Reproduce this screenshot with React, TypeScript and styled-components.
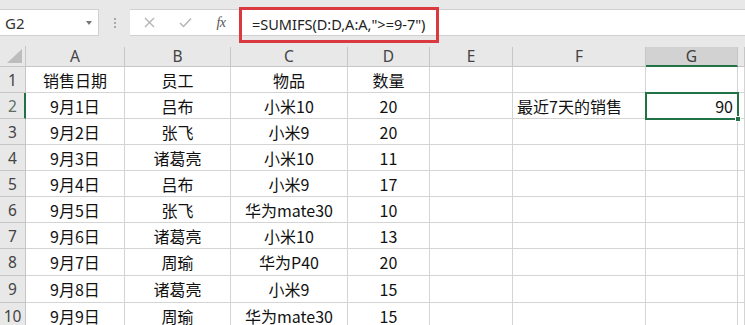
import React from "react";
import styled, { createGlobalStyle } from "styled-components";

const Global = createGlobalStyle`
  html, body { margin: 0; padding: 0; background: #fff; }
  body { font-family: "Noto Sans CJK SC", "Noto Sans", sans-serif; overflow: hidden; }
`;

const COLS = "26px 99px 106px 117px 82px 83px 133px 92px 1fr";
const GREEN = "#217346";

const Page = styled.div`
  width: 745px;
  height: 325px;
  overflow: hidden;
  background: #fff;
`;

const Toolbar = styled.div`
  display: flex;
  align-items: flex-start;
  height: 46px;
  padding-top: 9px;
  box-sizing: border-box;
  background: #e8e8e8;
`;

const NameBox = styled.div`
  width: 99px;
  height: 27px;
  box-sizing: border-box;
  background: #fff;
  border: 1px solid #d0d0d0;
  border-left: none;
  display: flex;
  align-items: center;
  justify-content: space-between;
  padding: 0 5px 0 5px;
  font-family: "Noto Sans", sans-serif;
  font-size: 15px;
  color: #333;
`;

const Caret = styled.span`
  width: 0;
  height: 0;
  border-left: 3.5px solid transparent;
  border-right: 3.5px solid transparent;
  border-top: 4px solid #777;
  margin-right: 1px;
`;

const Grip = styled.div`
  width: 31px;
  height: 27px;
  display: flex;
  flex-direction: column;
  align-items: center;
  justify-content: center;
  gap: 2px;
  span {
    width: 2px;
    height: 2px;
    background: #a8a8a8;
  }
`;

const FormulaBar = styled.div`
  flex: 1;
  height: 27px;
  box-sizing: border-box;
  background: #fff;
  border-top: 1px solid #d0d0d0;
  border-bottom: 1px solid #d0d0d0;
  display: flex;
  align-items: center;
`;

const IconSlot = styled.div<{ $w: number }>`
  width: ${(p) => p.$w}px;
  height: 25px;
  display: flex;
  align-items: center;
  justify-content: center;
  flex: none;
`;

const Fx = styled.span`
  font-family: "Liberation Serif", serif;
  font-style: italic;
  font-size: 14px;
  color: #555;
  letter-spacing: -0.5px;
`;

const Highlight = styled.div`
  align-self: flex-start;
  margin-top: -3px;
  height: 36px;
  width: 200px;
  box-sizing: border-box;
  border: 3px solid #d9393f;
  display: flex;
  align-items: center;
  padding: 0 0 3px 10px;
  font-family: "Noto Sans", sans-serif;
  font-size: 14.5px;
  color: #222;
  white-space: nowrap;
  flex: none;
`;

const Grid = styled.div`
  display: grid;
  grid-template-columns: ${COLS};
`;

const HeaderRow = styled(Grid)`
  height: 21px;
  background: #e8e8e8;
`;

const Corner = styled.div`
  position: relative;
  border-right: 1px solid #c6c6c6;
  border-bottom: 1px solid #c6c6c6;
  display: flex;
  align-items: flex-end;
  justify-content: flex-end;
  padding: 0 3px 3px 0;
`;

const ColHead = styled.div<{ $sel?: boolean }>`
  box-sizing: border-box;
  display: flex;
  align-items: center;
  justify-content: center;
  margin-top: 1px;
  background: ${(p) => (p.$sel ? "#d2d2d2" : "transparent")};
  border-right: 1px solid #c6c6c6;
  border-bottom: ${(p) => (p.$sel ? `2px solid ${GREEN}` : "1px solid #c6c6c6")};
  font-family: "Noto Sans", sans-serif;
  font-size: 15.5px;
  color: ${(p) => (p.$sel ? "#3d3d3d" : "#444")};
  line-height: 1;
  padding-top: 1px;
`;

const DataRow = styled(Grid)<{ $h: number }>`
  height: ${(p) => p.$h}px;
`;

const RowHead = styled.div<{ $sel?: boolean }>`
  box-sizing: border-box;
  background: #e8e8e8;
  border-bottom: 1px solid #c6c6c6;
  border-right: ${(p) => (p.$sel ? `2px solid ${GREEN}` : "1px solid #c6c6c6")};
  display: flex;
  align-items: center;
  justify-content: center;
  font-family: "Noto Sans", sans-serif;
  font-size: 15.5px;
  color: ${(p) => (p.$sel ? "#5b6f62" : "#444")};
  padding-left: ${(p) => (p.$sel ? "1px" : "0")};
`;

const Cell = styled.div<{ $align?: "left" | "center" | "right"; $sel?: boolean }>`
  position: relative;
  box-sizing: border-box;
  border-right: 1px solid #d4d4d4;
  border-bottom: 1px solid #d4d4d4;
  display: flex;
  align-items: center;
  justify-content: ${(p) =>
    p.$align === "left" ? "flex-start" : p.$align === "right" ? "flex-end" : "center"};
  padding: ${(p) => (p.$align === "left" ? "0 0 0 4px" : p.$align === "right" ? "0 4px 0 0" : "0")};
  font-size: 16px;
  color: #111;
  white-space: nowrap;
  ${(p) =>
    p.$sel &&
    `
    outline: 2px solid ${GREEN};
    outline-offset: -1px;
    z-index: 1;
  `}
`;

const FillHandle = styled.span`
  position: absolute;
  right: -4px;
  bottom: -4px;
  width: 6px;
  height: 6px;
  background: ${GREEN};
  border: 1px solid #fff;
  box-sizing: border-box;
`;

type Row = [string, string, string, string];

const data: Row[] = [
  ["销售日期", "员工", "物品", "数量"],
  ["9月1日", "吕布", "小米10", "20"],
  ["9月2日", "张飞", "小米9", "20"],
  ["9月3日", "诸葛亮", "小米10", "11"],
  ["9月4日", "吕布", "小米9", "17"],
  ["9月5日", "张飞", "华为mate30", "10"],
  ["9月6日", "诸葛亮", "小米10", "13"],
  ["9月7日", "周瑜", "华为P40", "20"],
  ["9月8日", "诸葛亮", "小米9", "15"],
  ["9月9日", "周瑜", "华为mate30", "15"],
];

const heights = [26, 26, 26, 26, 26, 26, 26, 27, 27, 27];
const letters = ["A", "B", "C", "D", "E", "F", "G", ""];

export default function App() {
  return (
    <Page>
      <Global />
      <Toolbar>
        <NameBox>
          <span>G2</span>
          <Caret />
        </NameBox>
        <Grip>
          <span />
          <span />
          <span />
        </Grip>
        <FormulaBar>
          <IconSlot $w={38}>
            <svg width="11" height="11" viewBox="0 0 11 11">
              <path d="M1 1 L10 10 M10 1 L1 10" stroke="#b4b4b4" strokeWidth="1.4" fill="none" />
            </svg>
          </IconSlot>
          <IconSlot $w={35}>
            <svg width="13" height="11" viewBox="0 0 13 11">
              <path d="M1 6 L4.5 9.5 L12 1.5" stroke="#b4b4b4" strokeWidth="1.5" fill="none" />
            </svg>
          </IconSlot>
          <IconSlot $w={36}>
            <Fx>fx</Fx>
          </IconSlot>
          <Highlight>=SUMIFS(D:D,A:A,"&gt;=9-7")</Highlight>
        </FormulaBar>
      </Toolbar>
      <HeaderRow>
        <Corner>
          <svg width="15" height="14" viewBox="0 0 15 14">
            <path d="M15 0 L15 14 L0 14 Z" fill="#bdbdbd" />
          </svg>
        </Corner>
        {letters.map((l, i) => (
          <ColHead key={i} $sel={l === "G"}>
            {l}
          </ColHead>
        ))}
      </HeaderRow>
      {data.map((r, i) => (
        <DataRow key={i} $h={heights[i]}>
          <RowHead $sel={i === 1}>{i + 1}</RowHead>
          {r.map((v, j) => (
            <Cell key={j}>{v}</Cell>
          ))}
          <Cell />
          <Cell $align="left">{i === 1 ? "最近7天的销售" : ""}</Cell>
          <Cell $align="right" $sel={i === 1}>
            {i === 1 ? "90" : ""}
            {i === 1 && <FillHandle />}
          </Cell>
          <Cell />
        </DataRow>
      ))}
    </Page>
  );
}
